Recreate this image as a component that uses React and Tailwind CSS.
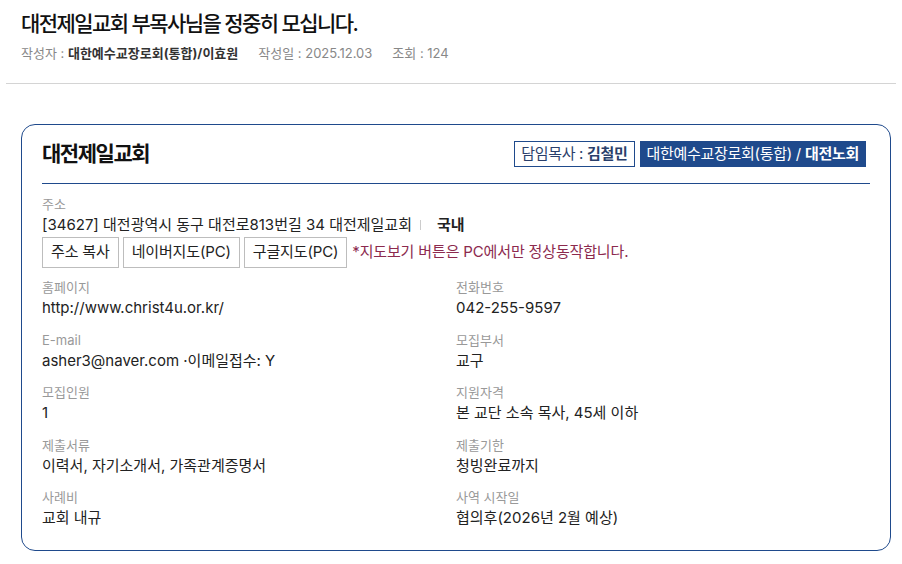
import React from 'react';

const FONT = { fontFamily: 'Inter, "Noto Sans CJK KR", sans-serif' };

const rows = [
  ['홈페이지', 'http://www.christ4u.or.kr/', '전화번호', '042-255-9597'],
  ['E-mail', 'asher3@naver.com ·이메일접수: Y', '모집부서', '교구'],
  ['모집인원', '1', '지원자격', '본 교단 소속 목사, 45세 이하'],
  ['제출서류', '이력서, 자기소개서, 가족관계증명서', '제출기한', '청빙완료까지'],
  ['사례비', '교회 내규', '사역 시작일', '협의후(2026년 2월 예상)'],
];

function Field({ label, value }) {
  return (
    <div>
      <p className="text-[13px] leading-[20px] text-[#999]">{label}</p>
      <p className="text-[15px] leading-[22.5px] text-[#222]">{value}</p>
    </div>
  );
}

export default function App() {
  return (
    <div className="min-h-screen bg-white px-[6px] pt-[9px]" style={FONT}>
      <div className="px-[15px]">
        <h1 className="text-[21px] leading-[30px] font-medium tracking-[-0.075em] text-[#111]">
          대전제일교회 부목사님을 정중히 모십니다.
        </h1>
        <div className="mt-1 flex gap-5 text-[13px] leading-[20px] text-[#888]">
          <span>
            작성자 : <b className="font-bold text-[#333]">대한예수교장로회(통합)/이효원</b>
          </span>
          <span>작성일 : 2025.12.03</span>
          <span>조회 : 124</span>
        </div>
      </div>
      <hr className="mt-5 border-0 border-t border-[#d4d4d4]" />

      <div className="mt-10 ml-[15px] w-[870px] rounded-[14px] border border-[#1f4a8c] px-5 pt-4 pb-5">
        <div className="flex h-[26px] items-center justify-between">
          <h2 className="text-[21px] font-bold tracking-[-0.07em] text-[#111]">대전제일교회</h2>
          <div className="mr-1 flex items-center gap-[5px] text-[15px] tracking-[-0.02em]">
            <span className="flex h-[26px] items-center border border-[#1f4a8c] px-[6px] text-[#2a3f6b]">
              담임목사 : <b className="ml-1 font-bold">김철민</b>
            </span>
            <span className="flex h-[26px] items-center bg-[#1f4a8c] px-[7px] text-white">
              대한예수교장로회(통합) / <b className="ml-1 font-bold">대전노회</b>
            </span>
          </div>
        </div>
        <div className="mt-4 border-b border-[#1f4a8c]" />

        <div className="mt-2.5">
          <p className="text-[13px] leading-[20px] text-[#999]">주소</p>
          <p className="flex items-center text-[15px] leading-[22px] text-[#222]">
            [34627] 대전광역시 동구 대전로813번길 34 대전제일교회
            <span className="mx-[8px] inline-block h-[10px] w-px bg-[#ccc]" />
            <b className="ml-2 font-bold">국내</b>
          </p>
          <div className="mt-px flex items-center gap-[4px]">
            {['주소 복사', '네이버지도(PC)', '구글지도(PC)'].map((t) => (
              <button
                key={t}
                className="h-[31px] border border-[#bdbdbd] bg-white px-[8px] text-[15px] tracking-[-0.01em] text-[#222]"
              >
                {t}
              </button>
            ))}
            <span className="ml-px text-[15px] tracking-[-0.01em] text-[#8c2a4e]">
              *지도보기 버튼은 PC에서만 정상동작합니다.
            </span>
          </div>
        </div>

        <div className="mt-[9px] grid grid-cols-[414px_1fr] gap-y-[10px]">
          {rows.map(([l1, v1, l2, v2]) => (
            <React.Fragment key={l1}>
              <Field label={l1} value={v1} />
              <Field label={l2} value={v2} />
            </React.Fragment>
          ))}
        </div>
      </div>
    </div>
  );
}
